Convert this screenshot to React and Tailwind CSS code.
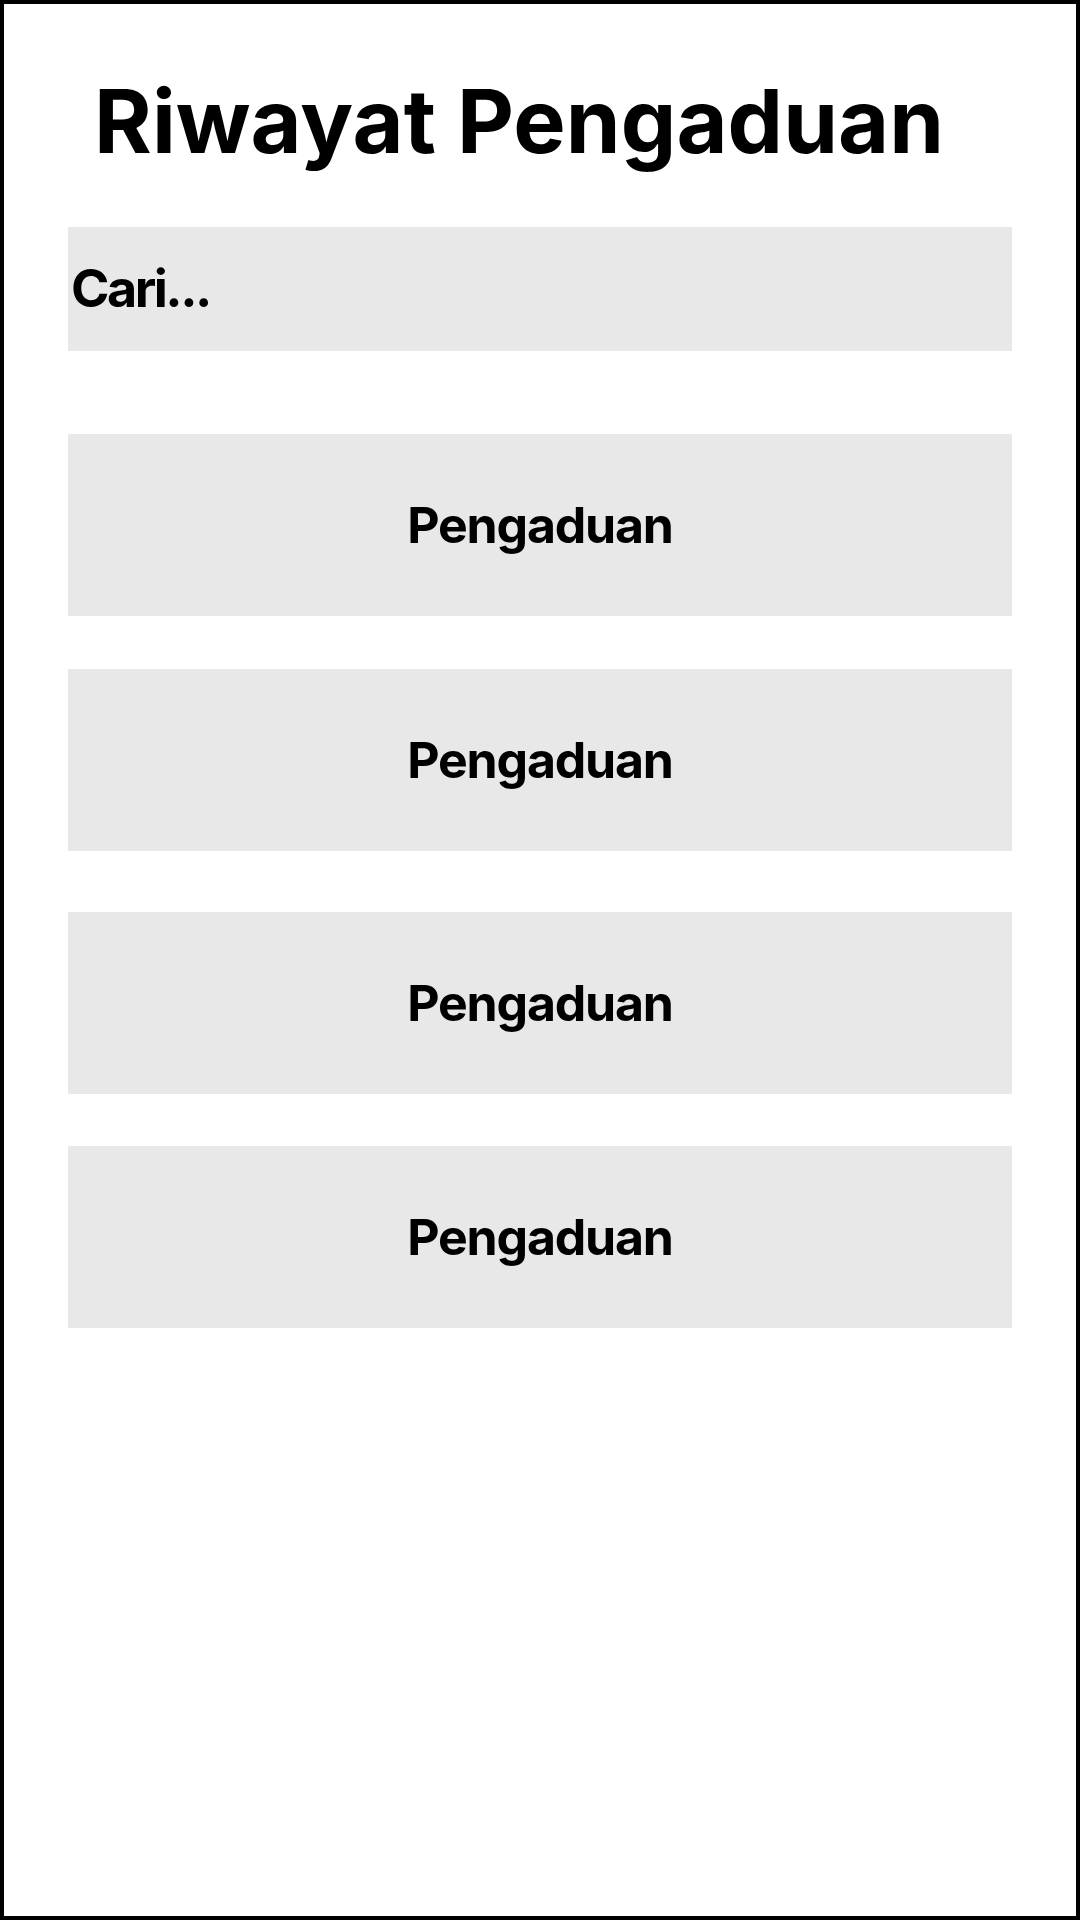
import React from "react";

export default function App() {
  const items = [
    { mt: "mt-[83px]" },
    { mt: "mt-[53px]" },
    { mt: "mt-[61px]" },
    { mt: "mt-[52px]" },
  ];
  return (
    <div
      className="w-[1080px] h-[1920px] border-4 border-black bg-white text-black flex flex-col"
      style={{ fontFamily: "Inter, 'Noto Sans', sans-serif" }}
    >
      <h1 className="mt-[73px] pl-[90px] text-[88px] leading-none font-bold tracking-[0.1px]">
        Riwayat Pengaduan
      </h1>
      <div className="mt-[62px] ml-[64px] w-[944px] h-[124px] bg-[#e8e8e8] flex items-center pl-[3px]">
        <span className="text-[52px] leading-none font-bold tracking-[-2.5px]">Cari...</span>
      </div>
      {items.map((it, i) => (
        <div
          key={i}
          className={`${it.mt} ml-[64px] w-[944px] h-[182px] bg-[#e8e8e8] flex items-center justify-center`}
        >
          <span className="text-[50px] leading-none font-bold tracking-[-1.2px]">Pengaduan</span>
        </div>
      ))}
    </div>
  );
}
